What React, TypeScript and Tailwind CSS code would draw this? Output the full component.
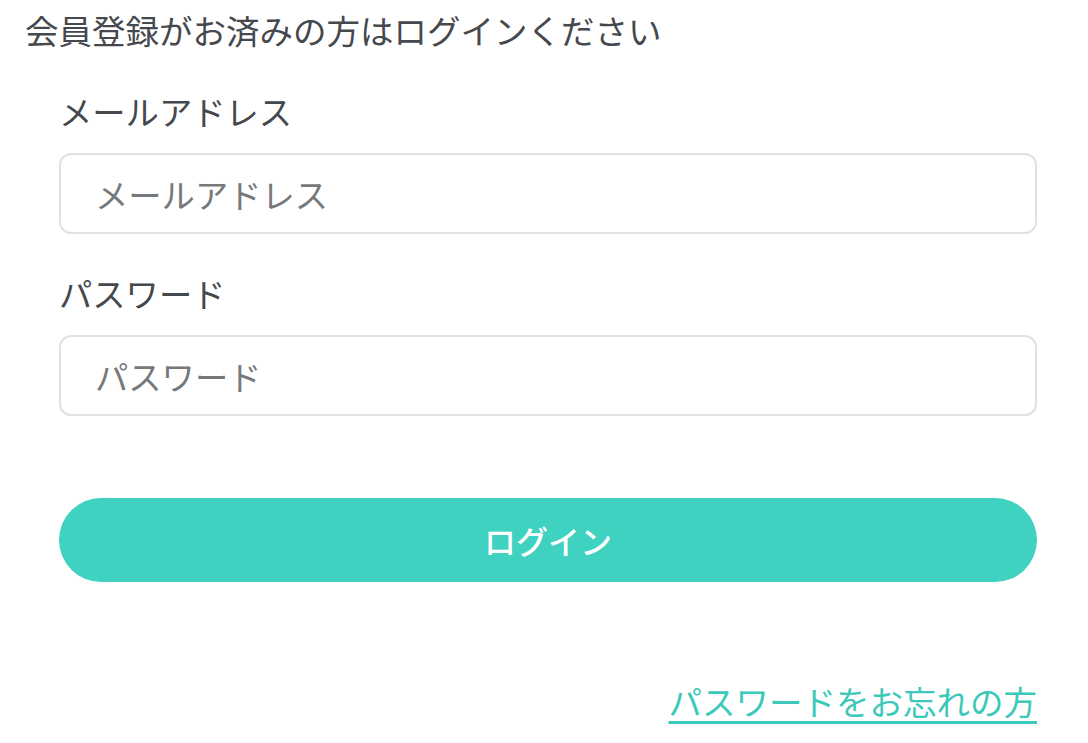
const font = { fontFamily: '"Noto Sans CJK JP", "Noto Sans", sans-serif' };

const Field = ({ label, type, mt }: { label: string; type: string; mt: string }) => (
  <div className={`flex flex-col ${mt}`}>
    <label className="text-[33.3px] leading-[48px] text-[#45484c]">{label}</label>
    <input
      type={type}
      placeholder={label}
      className="mt-[18px] h-[81px] w-full rounded-[12px] border-[2.5px] border-[#dfe1e3] bg-white px-[34px] text-[33.3px] text-[#45484c] outline-none placeholder:text-[#76797c]"
      style={font}
    />
  </div>
);

export default function App() {
  return (
    <div className="min-h-screen w-full bg-white pt-[6px]" style={font}>
      <h2 className="pl-[25px] text-[33.5px] leading-[48px] font-normal text-[#45484c]">
        会員登録がお済みの方はログインください
      </h2>
      <form className="ml-[59px] w-[978px]" onSubmit={(e) => e.preventDefault()}>
        <Field label="メールアドレス" type="email" mt="mt-[33px]" />
        <Field label="パスワード" type="password" mt="mt-[35px]" />
        <button
          type="submit"
          className="mt-[82px] flex h-[84px] w-full items-center justify-center rounded-full bg-[#3fd2c1] text-[32px] font-medium text-white"
          style={font}
        >
          ログイン
        </button>
        <div className="mt-[95px] flex justify-end">
          <a
            href="#"
            className="text-[33.5px] leading-[48px] text-[#3cc9b9] underline decoration-[3px] underline-offset-[6px]"
          >
            パスワードをお忘れの方
          </a>
        </div>
      </form>
    </div>
  );
}
